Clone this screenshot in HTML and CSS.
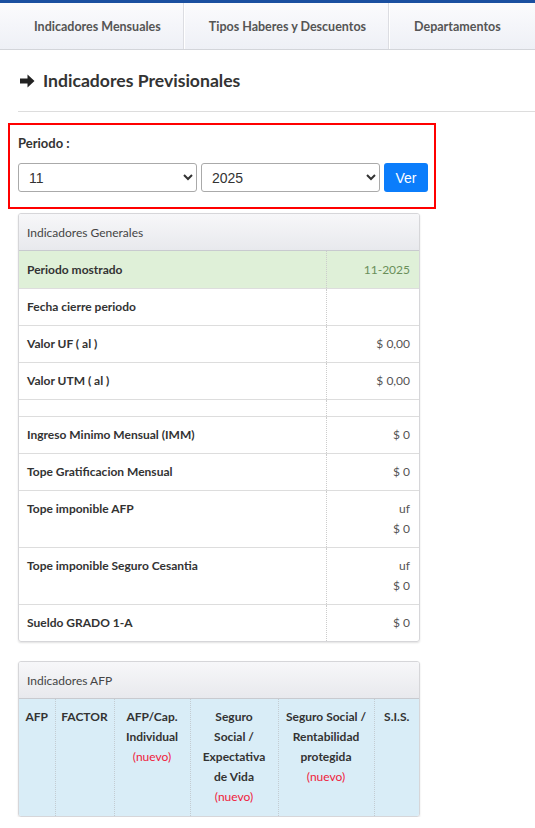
FILE: index.html
```html
<!DOCTYPE html>
<html lang="es">
<head>
<meta charset="utf-8">
<link rel="stylesheet" href="styles.css">
</head>
<body>
<div class="topline"></div>
<nav class="tabs">
  <a class="tab">Indicadores Mensuales</a>
  <a class="tab">Tipos Haberes y Descuentos</a>
  <a class="tab last">Departamentos</a>
</nav>
<main class="main">
  <h1 class="title">
    <svg class="arrow" width="15" height="14" viewBox="0 0 15 14"><path d="M0 4.5h7.5V0.5L14.5 7l-7 6.5V9.5H0z" fill="#222"/></svg>
    Indicadores Previsionales
  </h1>
  <hr class="sep">
  <div class="periodo">
    <div class="periodo-label">Periodo :</div>
    <div class="periodo-row">
      <select class="sel"><option>11</option></select>
      <select class="sel"><option>2025</option></select>
      <button class="btn">Ver</button>
    </div>
  </div>

  <section class="panel">
    <div class="panel-head">Indicadores Generales</div>
    <table class="tbl">
      <tr class="success"><th>Periodo mostrado</th><td>11-2025</td></tr>
      <tr><th>Fecha cierre periodo</th><td></td></tr>
      <tr><th>Valor UF ( al )</th><td>$ 0,00</td></tr>
      <tr><th>Valor UTM ( al )</th><td>$ 0,00</td></tr>
      <tr class="empty"><th></th><td></td></tr>
      <tr><th>Ingreso Minimo Mensual (IMM)</th><td>$ 0</td></tr>
      <tr><th>Tope Gratificacion Mensual</th><td>$ 0</td></tr>
      <tr><th>Tope imponible AFP</th><td>uf<br>$ 0</td></tr>
      <tr><th>Tope imponible Seguro Cesantia</th><td>uf<br>$ 0</td></tr>
      <tr><th>Sueldo GRADO 1-A</th><td>$ 0</td></tr>
    </table>
  </section>

  <section class="panel panel-afp">
    <div class="panel-head">Indicadores AFP</div>
    <table class="afp">
      <tr>
        <th class="c1">AFP</th>
        <th class="c2">FACTOR</th>
        <th class="c3">AFP/Cap.<br>Individual<br><span class="nuevo">(nuevo)</span></th>
        <th class="c4">Seguro<br>Social /<br>Expectativa<br>de Vida<br><span class="nuevo">(nuevo)</span></th>
        <th class="c5">Seguro Social /<br>Rentabilidad<br>protegida<br><span class="nuevo">(nuevo)</span></th>
        <th class="c6">S.I.S.</th>
      </tr>
    </table>
  </section>
</main>
</body>
</html>
```
FILE: styles.css
```css
* { box-sizing: border-box; }
body {
  margin: 0;
  font-family: Lato, "Open Sans", sans-serif;
  color: #333;
  background: #fff;
  font-size: 12px;
}
.topline { height: 3px; background: #1a4fa0; }
.tabs {
  display: flex;
  height: 47px;
  padding-left: 9px;
  background: linear-gradient(#fbfbfd, #eef0f6);
  border-bottom: 1px solid #d3d5da;
  overflow: hidden;
}
.tab {
  flex: none;
  white-space: nowrap;
  display: flex;
  align-items: center;
  padding: 0 22px 0 25px;
  font-size: 12.5px;
  font-weight: 700;
  color: #555;
  border-right: 1px solid #dcdde2;
  box-shadow: 1px 0 0 #fff;
}
.tab.last { border-right: 0; box-shadow: none; }
.main { padding-left: 18px; }
.title {
  display: flex;
  align-items: center;
  gap: 8px;
  margin: 0;
  padding: 0 0 0 2px;
  height: 61px;
  font-size: 17.6px;
  font-weight: 700;
  color: #333;
}
.arrow { flex: none; }
.sep {
  margin: 0;
  border: 0;
  border-top: 1px solid #ddd;
  height: 0;
}
.periodo {
  margin: 11px 0 0 -10px;
  width: 428px;
  height: 86px;
  border: 2px solid #f00;
  padding: 8px 0 0 8px;
}
.periodo-label {
  font-size: 13px;
  font-weight: 700;
  height: 20px;
  line-height: 20px;
  color: #333;
}
.periodo-row {
  display: flex;
  gap: 4px;
  margin-top: 10px;
}
.sel {
  width: 179px;
  height: 29px;
  border: 1px solid #aaa;
  border-radius: 3px;
  background: #fff;
  font-family: "Liberation Sans", Arial, sans-serif;
  font-size: 14px;
  color: #333;
  padding: 0 6px;
}
.btn {
  width: 44px;
  height: 29px;
  border: 0;
  border-radius: 3px;
  background: #0b7dfb;
  color: #fff;
  font-family: "Liberation Sans", Arial, sans-serif;
  font-size: 14px;
  padding: 0;
}
.panel {
  margin-top: 4px;
  width: 402px;
  border: 1px solid #d6d6d9;
  border-radius: 3px;
  box-shadow: 0 1px 2px rgba(0,0,0,0.12);
  overflow: hidden;
}
.panel-afp { margin-top: 19px; }
.panel-head {
  height: 37px;
  padding: 0 8px;
  display: flex;
  align-items: center;
  font-size: 12px;
  color: #444;
  background: linear-gradient(#f7f7f9, #e8e9ed);
  border-bottom: 1px solid #c8cacf;
}
.tbl, .afp {
  width: 100%;
  border-collapse: collapse;
}
.tbl th, .tbl td {
  padding: 8px;
  line-height: 20px;
  vertical-align: top;
  border-top: 1px solid #ddd;
}
.tbl tr:first-child th, .tbl tr:first-child td { border-top: 0; padding-top: 9px; }
.tbl th {
  text-align: left;
  font-weight: 700;
  width: 307px;
  border-right: 1px dotted #ccc;
}
.tbl td {
  text-align: right;
  padding-right: 9px;
  color: #555;
}
.tbl tr.empty th, .tbl tr.empty td { height: 17px; padding: 0; }
.tbl .success th, .tbl .success td { background: #dff0d8; }
.tbl .success td { color: #6a8f5a; }
.afp { table-layout: fixed; }
.afp th {
  background: #d9edf7;
  font-weight: 700;
  line-height: 20px;
  padding: 8px 2px;
  height: 117px;
  vertical-align: top;
  text-align: center;
  white-space: nowrap;
  border-right: 1px dotted #c3ccd2;
}
.afp th:last-child { border-right: 0; }
.afp .c1 { width: 36px; }
.afp .c2 { width: 59px; }
.afp .c3 { width: 76px; }
.afp .c4 { width: 88px; }
.afp .c5 { width: 96px; }
.nuevo { color: #f0203a; font-weight: 400; }
```
